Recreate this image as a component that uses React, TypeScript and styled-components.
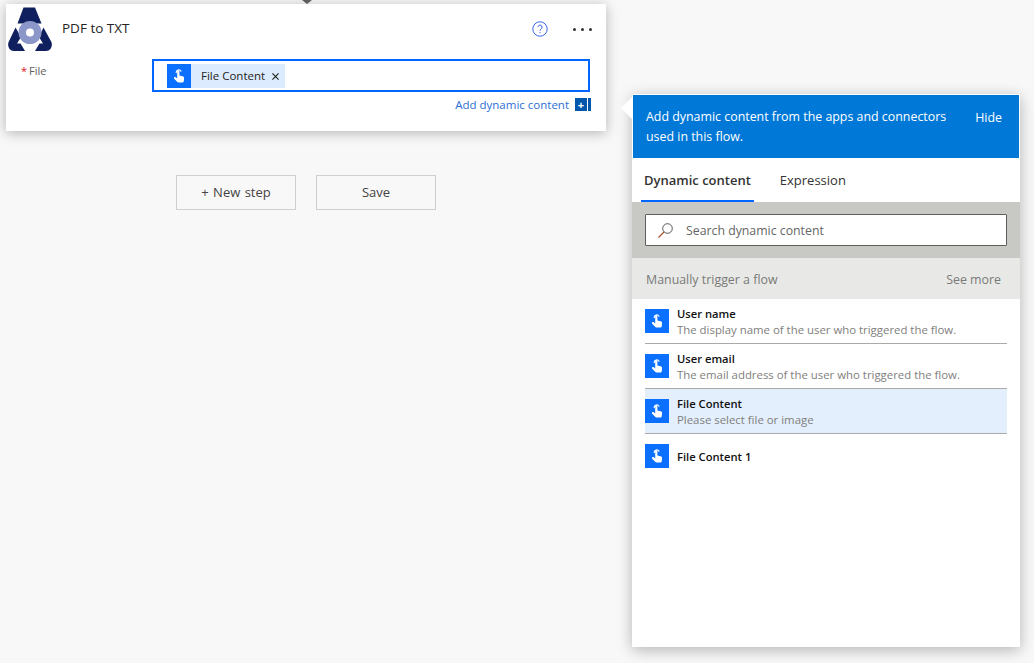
import React from "react"
import styled, { createGlobalStyle } from "styled-components"

const GlobalStyle = createGlobalStyle`
  html, body {
    margin: 0;
    padding: 0;
    height: 100%;
    background: #f8f8f8;
    font-family: "Open Sans", "Noto Sans", "Liberation Sans", sans-serif;
    color: #333;
    overflow: hidden;
  }
  * {
    box-sizing: border-box;
  }
`

const Page = styled.div`
  display: flex;
  align-items: flex-start;
  width: 1034px;
  height: 663px;
  padding: 4px 0 0 6px;
`

const Canvas = styled.div`
  position: relative;
  display: flex;
  flex-direction: column;
  width: 600px;
`

const Connector = styled.div`
  position: absolute;
  top: -4px;
  left: 296px;
  border-left: 5px solid transparent;
  border-right: 5px solid transparent;
  border-top: 4px solid #605e5c;
`

const StepCard = styled.section`
  height: 127px;
  background: #fff;
  box-shadow: 0 2px 12px rgba(0, 0, 0, 0.28);
`

const StepHeader = styled.header`
  display: flex;
  align-items: center;
  height: 48px;
  padding: 2px 14px 0 2px;
`

const StepTitle = styled.h2`
  flex: 1;
  margin: -2px 0 0 10px;
  font-size: 13.5px;
  font-weight: 400;
  color: #252423;
`

const HelpButton = styled.span`
  display: flex;
  width: 16px;
  height: 16px;
  margin-right: 25px;
`

const MoreDots = styled.span`
  display: flex;
  gap: 5px;
`

const Dot = styled.i`
  width: 3px;
  height: 3px;
  border-radius: 50%;
  background: #333;
`

const FieldRow = styled.div`
  display: flex;
  padding: 7px 16px 0 15px;
`

const FieldLabel = styled.label`
  width: 131px;
  padding-top: 4px;
  font-size: 11px;
  color: #605e5c;

  &::before {
    content: "*";
    margin-right: 2px;
    color: #e81123;
  }
`

const TokenInput = styled.div`
  display: flex;
  align-items: center;
  flex: 1;
  height: 33px;
  padding-left: 13px;
  border: 2px solid #0066ff;
`

const Token = styled.div`
  display: flex;
  align-items: center;
  height: 24px;
  background: #dcebfd;
  font-size: 11.5px;
  color: #252423;
`

const TokenLabel = styled.span`
  margin-left: 10px;
`

const TokenRemove = styled.svg`
  width: 7px;
  height: 7px;
  margin: 2px 6px 0 7px;
`

const IconTile = styled.span`
  display: flex;
  align-items: center;
  justify-content: center;
  flex: none;
  width: 24px;
  height: 24px;
  background: #0b6fff;
`

const AddRow = styled.div`
  display: flex;
  align-items: center;
  justify-content: flex-end;
  gap: 6px;
  padding: 5px 15px 0 0;
  font-size: 11.5px;
  color: #2b6fd4;
`

const AddIcon = styled.span`
  display: flex;
  width: 16px;
  height: 13px;
`

const AddPlus = styled.span`
  display: flex;
  align-items: center;
  justify-content: center;
  width: 12px;
  margin-right: 1px;
  background: #0058ad;
  color: #fff;
  font-size: 11px;
  font-weight: 700;
  line-height: 1;
`

const AddBar = styled.span`
  width: 3px;
  background: #0058ad;
`

const Actions = styled.div`
  display: flex;
  justify-content: center;
  gap: 20px;
  margin-top: 44px;
`

const ActionButton = styled.button`
  width: 120px;
  height: 35px;
  padding: 0 0 2px;
  border: 1px solid #cfcfcf;
  background: #f8f8f8;
  font: inherit;
  font-size: 13px;
  word-spacing: 1px;
  color: #444;
`

const Panel = styled.aside`
  position: relative;
  display: flex;
  flex-direction: column;
  width: 388px;
  height: 553px;
  margin: 90px 0 0 26px;
  background: #fff;
  box-shadow: 0 3px 14px rgba(0, 0, 0, 0.28);
`

const PanelArrow = styled.div`
  position: absolute;
  top: 3px;
  left: -11px;
  border-top: 11px solid transparent;
  border-bottom: 11px solid transparent;
  border-right: 11px solid #fff;
`

const PanelBanner = styled.div`
  display: flex;
  justify-content: space-between;
  height: 63px;
  margin: 1px 1px 0;
  padding: 12px 17px 0 13px;
  background: #0078d7;
  color: #fff;
  font-size: 12.4px;
  line-height: 20px;
`

const BannerText = styled.p`
  width: 310px;
  margin: 0;
`

const HideLink = styled.span`
  margin-top: 1px;
`

const Tabs = styled.div`
  display: flex;
  height: 44px;
  padding-left: 9px;
`

const Tab = styled.div<{ $active?: boolean }>`
  display: flex;
  align-items: center;
  height: 44px;
  margin-right: 23px;
  padding: 2px 3px 0;
  border-bottom: 2px solid ${(p) => (p.$active ? "#0066ff" : "transparent")};
  font-size: 13px;
  font-weight: ${(p) => (p.$active ? 600 : 400)};
  color: #333;
`

const SearchBand = styled.div`
  height: 56px;
  padding: 12px 13px;
  background: #c8c8c5;
`

const SearchBox = styled.div`
  display: flex;
  align-items: center;
  height: 32px;
  padding-left: 11px;
  border: 1px solid #605e5c;
  border-radius: 1px;
  background: #fff;
  font-size: 12.3px;
  color: #666;
`

const SearchIcon = styled.svg`
  width: 17px;
  height: 17px;
  margin-right: 12px;
`

const SectionHead = styled.div`
  display: flex;
  align-items: center;
  justify-content: space-between;
  height: 41px;
  padding: 2px 19px 0 14px;
  background: #e8e9e7;
  font-size: 12.4px;
  color: #7a7a78;
`

const TokenList = styled.ul`
  margin: 0;
  padding: 0 13px;
  list-style: none;
`

const TokenRow = styled.li<{ $selected?: boolean; $last?: boolean }>`
  display: flex;
  gap: 8px;
  height: 45px;
  padding-top: 10px;
  border-bottom: ${(p) => (p.$last ? "none" : "1px solid #aaa")};
  background: ${(p) => (p.$selected ? "#e3effd" : "transparent")};
`

const TokenText = styled.div<{ $single?: boolean }>`
  display: flex;
  flex-direction: column;
  justify-content: ${(p) => (p.$single ? "center" : "flex-start")};
  height: ${(p) => (p.$single ? "24px" : "auto")};
  margin-top: ${(p) => (p.$single ? "0" : "-3px")};
`

const TokenName = styled.div`
  font-size: 11.2px;
  font-weight: 600;
  line-height: 15px;
  color: #111;
`

const TokenDesc = styled.div`
  margin-top: 1px;
  font-size: 11.4px;
  line-height: 16px;
  color: #807e7c;
`

const HandIcon = () => (
  <svg width="14" height="16" viewBox="0 0 14 16" fill="none">
    <path
      d="M4.200 4.600A2.600 2.600 0 0 1 9 3.200"
      stroke="#fff"
      strokeWidth="1.200"
      strokeLinecap="round"
    />
    <path
      d="M5.200 3.400a1.100 1.100 0 0 1 2.200 0v4.200l3.200.7c1 .2 1.600 1 1.500 2l-.3 2.600c-.1.900-.9 1.600-1.800 1.600H6.600c-.6 0-1.100-.3-1.500-.7L2.200 10.700c-.4-.5-.4-1.100 0-1.500.5-.4 1.100-.4 1.600 0l1.400 1.200Z"
      fill="#fff"
    />
  </svg>
)

const Logo = () => (
  <svg width="44" height="44" viewBox="0 0 44 44">
    <path d="M15.500 0.500h11.500l6.500 16H9.500Z" fill="#10205f" />
    <path
      d="M7.500 20.500L.6 35c-1.400 3.600.4 9 5.400 9H17L12.500 36.500H9L13 30Z"
      fill="#10205f"
    />
    <path
      d="M35.500 20.500L43.400 35c1.400 3.600-.4 9-5.400 9H27L31.500 36.500H35L31 30Z"
      fill="#10205f"
    />
    <circle cx="22" cy="25.500" r="11.500" fill="#8b97c8" />
    <circle cx="22" cy="25.500" r="4" fill="#fff" />
  </svg>
)

const rows = [
  { name: "User name", desc: "The display name of the user who triggered the flow." },
  { name: "User email", desc: "The email address of the user who triggered the flow." },
  { name: "File Content", desc: "Please select file or image", selected: true },
  { name: "File Content 1", last: true },
]

export default function App() {
  return (
    <>
      <GlobalStyle />
      <Page>
        <Canvas>
          <Connector />
          <StepCard>
            <StepHeader>
              <Logo />
              <StepTitle>PDF to TXT</StepTitle>
              <HelpButton>
                <svg width="16" height="16" viewBox="0 0 16 16" fill="none">
                  <circle cx="8" cy="8" r="7.200" stroke="#3b66e8" />
                  <path
                    d="M5.900 6.200a2.100 2.100 0 1 1 3.300 1.700C8.500 8.400 8 8.800 8 9.800"
                    stroke="#3b66e8"
                  />
                  <circle cx="8" cy="11.600" r=".7" fill="#3b66e8" />
                </svg>
              </HelpButton>
              <MoreDots>
                <Dot />
                <Dot />
                <Dot />
              </MoreDots>
            </StepHeader>
            <FieldRow>
              <FieldLabel>File</FieldLabel>
              <TokenInput>
                <Token>
                  <IconTile>
                    <HandIcon />
                  </IconTile>
                  <TokenLabel>File Content</TokenLabel>
                  <TokenRemove viewBox="0 0 8 8">
                    <path d="M.5.5l7 7M7.500.5l-7 7" stroke="#222" strokeWidth="1.300" fill="none" />
                  </TokenRemove>
                </Token>
              </TokenInput>
            </FieldRow>
            <AddRow>
              Add dynamic content
              <AddIcon>
                <AddPlus>+</AddPlus>
                <AddBar />
              </AddIcon>
            </AddRow>
          </StepCard>
          <Actions>
            <ActionButton>+ New step</ActionButton>
            <ActionButton>Save</ActionButton>
          </Actions>
        </Canvas>
        <Panel>
          <PanelArrow />
          <PanelBanner>
            <BannerText>
              Add dynamic content from the apps and connectors used in this flow.
            </BannerText>
            <HideLink>Hide</HideLink>
          </PanelBanner>
          <Tabs>
            <Tab $active>Dynamic content</Tab>
            <Tab>Expression</Tab>
          </Tabs>
          <SearchBand>
            <SearchBox>
              <SearchIcon viewBox="0 0 17 17" fill="none">
                <circle cx="10.500" cy="6.500" r="4.800" stroke="#555" />
                <path d="M7 10L1.500 15.500" stroke="#a5552e" strokeWidth="1.200" />
              </SearchIcon>
              Search dynamic content
            </SearchBox>
          </SearchBand>
          <SectionHead>
            <span>Manually trigger a flow</span>
            <span>See more</span>
          </SectionHead>
          <TokenList>
            {rows.map((r) => (
              <TokenRow key={r.name} $selected={r.selected} $last={r.last}>
                <IconTile>
                  <HandIcon />
                </IconTile>
                <TokenText $single={!r.desc}>
                  <TokenName>{r.name}</TokenName>
                  {r.desc && <TokenDesc>{r.desc}</TokenDesc>}
                </TokenText>
              </TokenRow>
            ))}
          </TokenList>
        </Panel>
      </Page>
    </>
  )
}
